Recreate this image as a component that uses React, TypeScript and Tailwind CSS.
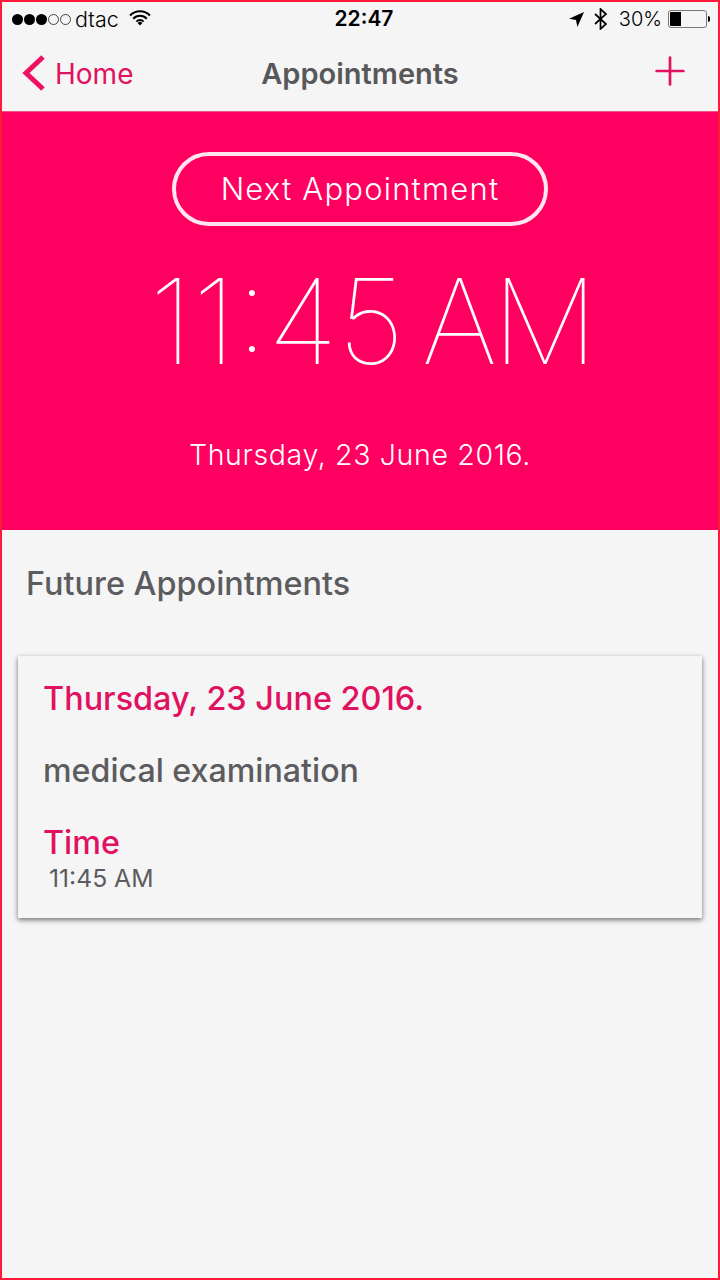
import { Plus } from "lucide-react";

const PINK = "text-[#e0115f]";

function StatusBar() {
  return (
    <div className="h-[34px] flex items-center justify-between text-black pl-[10px] pr-[8px] relative text-[20px]">
      <div className="flex items-center">
        <div className="flex gap-[1px] mr-[4px]">
          {[0, 1, 2].map((i) => (
            <span key={i} className="w-[11px] h-[11px] rounded-full bg-black" />
          ))}
          {[0, 1].map((i) => (
            <span key={i} className="w-[11px] h-[11px] rounded-full border border-[#444]" />
          ))}
        </div>
        <span className="font-light text-[21.5px]">dtac</span>
        <svg width="22" height="16" viewBox="0 0 22 16" className="ml-[10px] -mt-[2px]">
          <path d="M1 5.5a14 14 0 0 1 20 0M4.2 8.7a9.5 9.5 0 0 1 13.6 0M7.4 11.6a5 5 0 0 1 7.2 0" fill="none" stroke="#000" strokeWidth="2" />
          <path d="M8.6 13a3.4 3.4 0 0 1 4.8 0L11 15.6z" fill="#000" />
        </svg>
      </div>
      <span className="absolute left-[8px] right-0 text-center font-semibold text-[21px] pointer-events-none">22:47</span>
      <div className="flex items-center">
        <svg width="15" height="15" viewBox="0 0 15 15">
          <path d="M15 0 0 6.8l7 1.2 1.4 7z" fill="#000" />
        </svg>
        <svg width="14" height="22" viewBox="0 0 14 22" className="ml-[10px]">
          <path d="M1 6l11 10-5.5 5V1L12 6 1 16" fill="none" stroke="#000" strokeWidth="1.7" />
        </svg>
        <span className="ml-[11px] font-light">30%</span>
        <div className="ml-[6px] w-[39px] h-[18px] rounded-[3px] border border-[#777] p-[1px]">
          <div className="w-[11px] h-full bg-black rounded-l-[1px]" />
        </div>
        <span className="w-[2px] h-[6px] bg-black rounded-r-full ml-[1px]" />
      </div>
    </div>
  );
}

function NavBar() {
  return (
    <div className="h-[76px] flex items-center justify-between relative border-b border-[#e8557f]">
      <div className="flex items-center pl-[20px]">
        <svg width="24" height="38" viewBox="0 0 24 38" className="-mt-[2px]">
          <path d="M21 3 4 19l17 16" fill="none" stroke="#ef1262" strokeWidth="5" />
        </svg>
        <span className={`${PINK} text-[28px] ml-[9px]`}>Home</span>
      </div>
      <span className="absolute left-0 right-0 text-center text-[29px] font-semibold text-[#58585a] pointer-events-none">
        Appointments
      </span>
      <Plus size={46} strokeWidth={1.4} className={`${PINK} mr-[25px] -mt-[6px]`} />
    </div>
  );
}

function Hero() {
  return (
    <div className="h-[418px] bg-[#ff0060] flex flex-col items-center text-white">
      <div className="mt-[40px] w-[376px] h-[74px] rounded-full border-[4px] border-white/90 flex items-center justify-center text-[31px] font-light tracking-[1.2px]">
        Next Appointment
      </div>
      <div className="mt-[30px] ml-[22px] h-[130px] leading-[130px] text-[118px] font-thin [font-feature-settings:'case'] [word-spacing:-16px] whitespace-nowrap">
        <span className="tracking-[0px]">11:45</span> <span className="tracking-[-5px]">AM</span>
      </div>
      <div className="mt-[48px] text-[28.5px] font-light tracking-[0.65px]">Thursday, 23 June 2016.</div>
    </div>
  );
}

function AppointmentCard() {
  return (
    <div className="mx-[16px] mt-[51px] h-[262px] bg-[#f5f5f6] shadow-[0_2px_5px_rgba(0,0,0,0.55)] pl-[25px] pt-[23px]">
      <div className={`${PINK} text-[32.4px] leading-[40px] font-medium`}>Thursday, 23 June 2016.</div>
      <div className="text-[#5c5c5e] text-[32.2px] leading-[40px] mt-[32px] font-medium">medical examination</div>
      <div className={`${PINK} text-[32.3px] leading-[40px] mt-[32px] font-medium`}>Time</div>
      <div className="text-[#5c5c5e] text-[24.7px] leading-[32px] ml-[6px] -mt-[1px]">11:45 AM</div>
    </div>
  );
}

export default function App() {
  return (
    <div className="w-[720px] h-[1280px] overflow-hidden border-2 border-[#ff1a3c] bg-[#f5f5f6] font-['Inter',sans-serif]">
      <StatusBar />
      <NavBar />
      <Hero />
      <div className="pl-[24px] pt-[33px] text-[32.4px] leading-[42px] font-medium text-[#5c5c5e]">Future Appointments</div>
      <AppointmentCard />
    </div>
  );
}
